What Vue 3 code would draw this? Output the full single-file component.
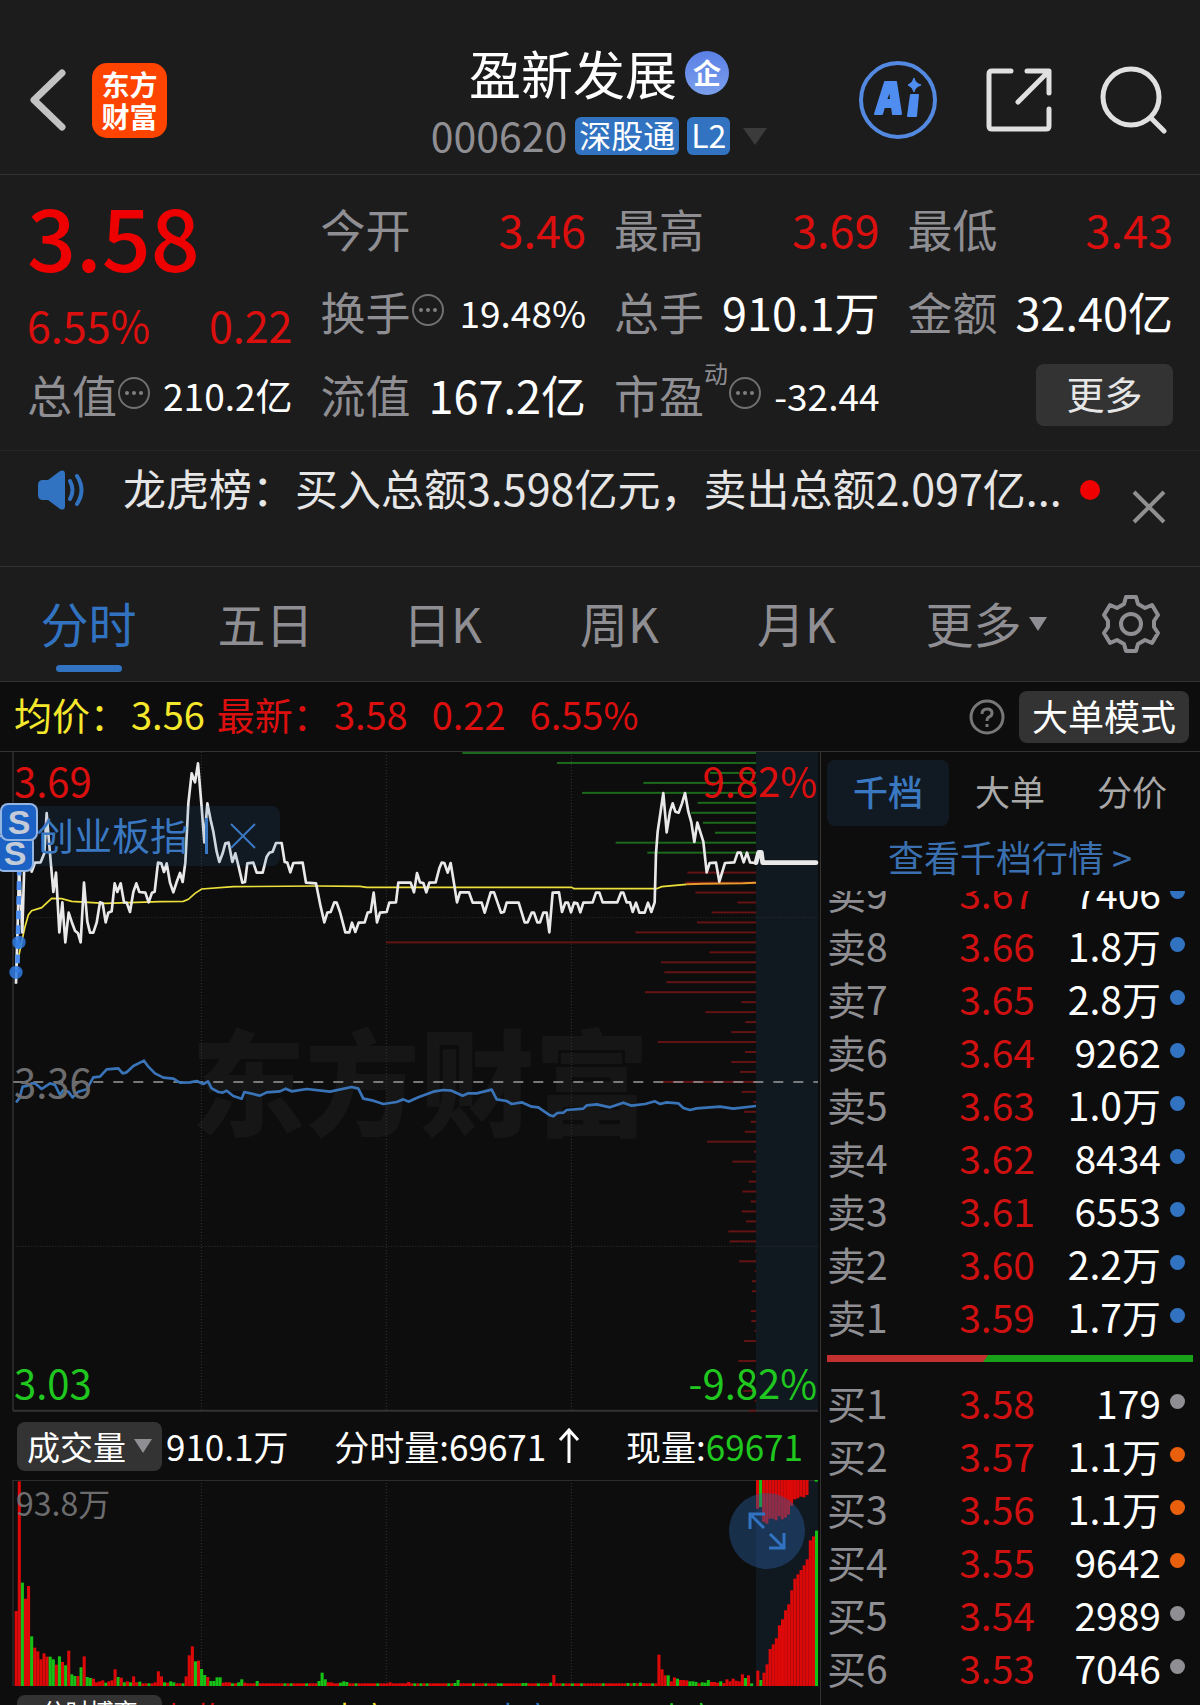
<template>
  <div class="stock-view">
    <!-- Header -->
    <header class="stock-header">
      <div class="header-left">
        <button class="icon-btn" aria-label="返回">
          <svg width="36" height="62" viewBox="0 0 36 62" fill="none">
            <path d="M32 4L4 31L32 58" stroke="#c2c2c2" stroke-width="7" stroke-linecap="round" stroke-linejoin="round" />
          </svg>
        </button>
        <a href="#" class="brand">
          <span>东方</span>
          <span>财富</span>
        </a>
      </div>
      <div class="header-center">
        <h1 class="stock-name">盈新发展<span class="corp-badge">企</span></h1>
        <div class="stock-code">
          <span class="code">000620</span>
          <span class="tag">深股通</span>
          <span class="tag">L2</span>
          <svg class="code-caret" width="24" height="17" viewBox="0 0 24 17">
            <path d="M0 0H24L12 17Z" fill="#3b3b3b" />
          </svg>
        </div>
      </div>
      <div class="header-right">
        <button class="icon-btn" aria-label="AI">
          <svg width="80" height="80" viewBox="0 0 80 80" fill="none">
            <circle cx="40" cy="40" r="37" stroke="#5389e0" stroke-width="4" />
            <path d="M17 54L27 22H38L43 54H35L34 47H26L24 54ZM28 40H33L32 29Z" fill="#4f8df0" stroke="#4f8df0" stroke-width="2" stroke-linejoin="round" fill-rule="evenodd" />
            <path d="M53 35H60L58 56H50Z" fill="#4f8df0" stroke="#4f8df0" stroke-width="2" stroke-linejoin="round" />
            <path d="M56 18Q57 23 63 25Q57 27 56 32Q55 27 50 25Q55 23 56 18Z" fill="#4f8df0" stroke="#4f8df0" />
          </svg>
        </button>
        <button class="icon-btn" aria-label="分享">
          <svg width="66" height="66" viewBox="0 0 66 66" fill="none" stroke="#e0e0e0" stroke-width="5" stroke-linecap="round" stroke-linejoin="round">
            <path d="M25 4H6Q3 4 3 7V59Q3 62 6 62H60Q63 62 63 59V42" />
            <path d="M41 4H63V26M62 5L32 35" />
          </svg>
        </button>
        <button class="icon-btn" aria-label="搜索">
          <svg width="68" height="68" viewBox="0 0 68 68" fill="none" stroke="#e0e0e0" stroke-width="5" stroke-linecap="round">
            <circle cx="31" cy="31" r="28" />
            <path d="M52 53L64 65" />
          </svg>
        </button>
      </div>
    </header>

    <!-- Quote -->
    <section class="quote">
      <div class="quote-main">
        <div class="price">3.58</div>
        <div class="change">
          <span>6.55%</span>
          <span>0.22</span>
        </div>
      </div>
      <div v-for="item in quoteItems" :key="item.label" class="quote-item">
        <span class="label">{{ item.label }}</span>
        <sup v-if="item.sup" class="sup">{{ item.sup }}</sup>
        <svg v-if="item.info" class="info-icon" width="34" height="34" viewBox="0 0 34 34">
          <circle cx="17" cy="17" r="15" fill="none" stroke="#707073" stroke-width="2" />
          <circle cx="10" cy="17" r="2" fill="#808083" />
          <circle cx="17" cy="17" r="2" fill="#808083" />
          <circle cx="24" cy="17" r="2" fill="#808083" />
        </svg>
        <span class="value" :class="{ up: item.up, small: item.info }">{{ item.value }}</span>
      </div>
      <div class="quote-more">
        <button class="more-btn">更多</button>
      </div>
    </section>

    <!-- Notice -->
    <section class="notice">
      <svg class="speaker" width="50" height="42" viewBox="0 0 50 42">
        <path d="M0 16Q0 11 5 11H10L22 2Q27 0 27 5V37Q27 42 22 40L10 31H5Q0 31 0 26Z" fill="#3173c1" />
        <path d="M32 12Q37 21 32 30M39 7Q48 21 39 35" fill="none" stroke="#3173c1" stroke-width="4" stroke-linecap="round" />
      </svg>
      <a href="#" class="notice-text">龙虎榜：买入总额3.598亿元，卖出总额2.097亿...</a>
      <span class="notice-dot"></span>
      <button class="icon-btn notice-close" aria-label="关闭">
        <svg width="34" height="34" viewBox="0 0 34 34">
          <path d="M2 2L32 32M32 2L2 32" stroke="#909090" stroke-width="4" />
        </svg>
      </button>
    </section>

    <!-- Period tabs -->
    <nav class="tabs">
      <button v-for="(tab, index) in tabs" :key="tab" class="tab" :class="{ active: index === 0 }">
        <span class="tab-text">
          {{ tab }}
          <svg v-if="tab === '更多'" class="tab-caret" width="18" height="14" viewBox="0 0 18 14">
            <path d="M0 0H18L9 14Z" fill="#8e8e93" />
          </svg>
        </span>
      </button>
      <button class="icon-btn" aria-label="设置">
        <svg width="60" height="60" viewBox="0 0 60 60" fill="none" stroke="#8e8e93" stroke-width="4" stroke-linejoin="round">
          <path d="M25 3H35L37 10L44 14L51 11L57 21L53 27V33L57 39L51 49L44 46L37 50L35 57H25L23 50L16 46L9 49L3 39L7 33V27L3 21L9 11L16 14L23 10Z" />
          <circle cx="30" cy="30" r="10" />
        </svg>
      </button>
    </nav>

    <!-- Average and latest price -->
    <div class="summary">
      <div class="summary-text">
        <span class="avg">均价：<b>3.56</b></span>
        <span class="latest">最新：<b>3.58</b><b>0.22</b><b>6.55%</b></span>
      </div>
      <svg class="help" width="38" height="38" viewBox="0 0 38 38" fill="none" stroke="#77777a" stroke-width="3">
        <circle cx="19" cy="19" r="16" />
        <path d="M14 16Q14 11 19 11Q24 11 24 15Q24 18 21 19Q19 20 19 23M19 26V29" />
      </svg>
      <button class="mode-btn">大单模式</button>
    </div>

    <main class="content">
      <section class="charts">
        <!-- Intraday chart -->
        <div class="chart">
          <svg viewBox="0 36 2460 1980">
            <text x="572" y="1162" class="watermark">东方财富</text>
            <rect x="2268" y="36" width="186" height="1980" fill="#101820" />
            <g stroke="#343434" stroke-width="3" stroke-dasharray="3 6">
              <path d="M604 36V2012M1159 36V2012M1714 36V2012M40 533H2454M40 1519H2454" />
            </g>
            <path d="M39 36V2012" stroke="#2c2c2e" stroke-width="5" />
            <path d="M39 2012H2454" stroke="#333335" stroke-width="6" />
            <rect
              v-for="(bar, index) in profile"
              :key="index"
              :x="2268 - bar"
              :y="36 + index * 29.9"
              :width="bar"
              height="6"
              :fill="index < 11 ? '#1b691b' : '#631314'"
            />
            <path d="M40 1026H2454" stroke="#9b9b9b" stroke-width="5" stroke-dasharray="30 30" />
            <polyline :points="indexLine" fill="none" stroke="#3a74b8" stroke-width="8" stroke-linejoin="round" />
            <polyline :points="avgLine" fill="none" stroke="#ece03c" stroke-width="5" />
            <path d="M2060 433L2110 431L2230 430L2268 428" fill="none" stroke="#e89a2c" stroke-width="6" />
            <polyline :points="priceLine" fill="none" stroke="#e9e9e9" stroke-width="8" stroke-linejoin="round" />
            <path d="M2268 368L2276 337H2284L2288 368H2448" fill="none" stroke="#e9e9e9" stroke-width="14" stroke-linecap="round" stroke-linejoin="round" />
            <path d="M58 380L52 697" stroke="#4d8ff0" stroke-width="14" stroke-dasharray="26 18" />
            <circle cx="57" cy="607" r="20" fill="#2f7ae0" fill-opacity="0.85" />
            <circle cx="48" cy="697" r="20" fill="#2f7ae0" fill-opacity="0.85" />
          </svg>
          <span class="axis top-left up">3.69</span>
          <span class="axis top-right up">9.82%</span>
          <span class="axis middle-left">3.36</span>
          <span class="axis bottom-left down">3.03</span>
          <span class="axis bottom-right down">-9.82%</span>
          <div class="overlay-index">
            <span>创业板指</span>
            <i class="overlay-split"></i>
            <button class="icon-btn" aria-label="移除叠加">
              <svg width="26" height="26" viewBox="0 0 26 26">
                <path d="M1 1L25 25M25 1L1 25" stroke="#3a78c2" stroke-width="2" />
              </svg>
            </button>
          </div>
          <span class="sell-mark second">S</span>
          <span class="sell-mark">S</span>
        </div>

        <!-- Volume chart -->
        <div class="volume-head">
          <button class="indicator-btn">
            成交量
            <svg width="18" height="14" viewBox="0 0 18 14"><path d="M0 0H18L9 14Z" fill="#8e8e93" /></svg>
          </button>
          <span class="volume-total">910.1万</span>
          <span class="volume-minute">分时量:69671<svg width="22" height="36" viewBox="0 0 22 36" fill="none" stroke="#fff" stroke-width="3"><path d="M11 35V2M2 12L11 2L20 12" /></svg></span>
          <span class="volume-now">现量:<em>69671</em></span>
        </div>
        <div class="volume">
          <svg viewBox="0 300 2460 618">
            <rect x="2268" y="300" width="186" height="618" fill="#101820" />
            <path d="M604 300V918M1159 300V918M1714 300V918" stroke="#343434" stroke-width="3" stroke-dasharray="3 6" />
            <path d="M39 918V301H2454" fill="none" stroke="#2c2c2e" stroke-width="4" />
            <rect
              v-for="(bar, index) in volumeBars"
              :key="index"
              :x="44 + index * 9.27"
              :y="918 - bar.height"
              width="9.27"
              :height="bar.height"
              :fill="bar.up ? '#dd0808' : '#16c016'"
            />
            <rect
              v-for="(height, index) in hangingBars"
              :key="'h' + index"
              :x="2268 + index * 9.27"
              y="300"
              width="9.27"
              :height="height"
              :fill="index === 1 || index === 19 ? '#16c016' : '#dd0808'"
            />
          </svg>
          <span class="volume-max">93.8万</span>
          <button class="expand-btn" aria-label="展开">
            <svg width="38" height="38" viewBox="0 0 38 38" fill="none" stroke="#3173c1" stroke-width="3">
              <path d="M2 17V2H17M2 2L16 16M22 22L36 36M36 21V36H21" />
            </svg>
          </button>
        </div>
        <div class="game-row">
          <button class="indicator-btn game-btn">分时博弈</button>
          <span class="game-item up">机构:-1.003</span>
          <span class="game-item yellow">大户:0.087</span>
          <span class="game-item blue">中户:0.788</span>
          <span class="game-item down">小户:0.579</span>
        </div>
      </section>

      <!-- Order book -->
      <aside class="book">
        <div class="book-tabs">
          <button class="book-tab active">千档</button>
          <button class="book-tab">大单</button>
          <button class="book-tab">分价</button>
        </div>
        <a href="#" class="book-link">查看千档行情 &gt;</a>
        <div class="book-list">
          <table class="asks">
            <tbody>
              <tr v-for="row in asks" :key="row[0]">
                <th scope="row">{{ row[0] }}</th>
                <td class="book-price">{{ row[1] }}</td>
                <td class="book-volume">{{ row[2] }}</td>
                <td class="book-dot"><i></i></td>
              </tr>
            </tbody>
          </table>
          <div class="ratio"><div class="ratio-buy"></div></div>
          <table>
            <tbody>
              <tr v-for="row in bids" :key="row[0]">
                <th scope="row">{{ row[0] }}</th>
                <td class="book-price">{{ row[1] }}</td>
                <td class="book-volume">{{ row[2] }}</td>
                <td class="book-dot"><i :class="row[3]"></i></td>
              </tr>
            </tbody>
          </table>
        </div>
      </aside>
    </main>
  </div>
</template>

<script setup>
import { computed } from 'vue'

const quoteItems = [
  { label: '今开', value: '3.46', up: true },
  { label: '最高', value: '3.69', up: true },
  { label: '最低', value: '3.43', up: true },
  { label: '换手', value: '19.48%', info: true },
  { label: '总手', value: '910.1万' },
  { label: '金额', value: '32.40亿' },
  { label: '总值', value: '210.2亿', info: true },
  { label: '流值', value: '167.2亿' },
  { label: '市盈', value: '-32.44', info: true, sup: '动' }
]

const tabs = ['分时', '五日', '日K', '周K', '月K', '更多']

// 卖盘
const asks = [
  ['卖9', '3.67', '7406'],
  ['卖8', '3.66', '1.8万'],
  ['卖7', '3.65', '2.8万'],
  ['卖6', '3.64', '9262'],
  ['卖5', '3.63', '1.0万'],
  ['卖4', '3.62', '8434'],
  ['卖3', '3.61', '6553'],
  ['卖2', '3.60', '2.2万'],
  ['卖1', '3.59', '1.7万']
]

// 买盘
const bids = [
  ['买1', '3.58', '179', 'grey'],
  ['买2', '3.57', '1.1万', 'orange'],
  ['买3', '3.56', '1.1万', 'orange'],
  ['买4', '3.55', '9642', 'orange'],
  ['买5', '3.54', '2989', 'grey'],
  ['买6', '3.53', '7046', 'grey']
]

const priceLine = `48,731 49,690 53,560 57,380 62,480 67,577 75,300 80,270 88,330 95,395 105,368 122,367 133,340
140,219 150,340 160,456 168,398 178,577 187,487 196,607 206,518 215,545 225,572 234,580 242,607 252,428
262,545 270,578 280,578 290,548 300,487 308,490 317,547 325,518 335,514 344,430 352,456 362,430 372,487
380,488 390,516 400,456 409,430 418,456 436,458 446,487 456,458 464,455 474,368 484,370 492,396 500,370
510,428 520,457 530,426 540,399 548,426 556,368 565,190 575,100 585,127 594,70 604,190 613,307 622,190
632,240 640,275 650,335 658,366 668,340 676,310 686,308 697,366 706,340 716,380 727,428 735,426 742,370
760,368 770,398 788,398 800,350 808,338 818,335 828,309 845,309 854,366 862,368 871,397 880,369 908,368
918,428 948,430 962,500 973,547 982,518 992,516 1003,487 1010,488 1020,516 1036,577 1048,577 1056,548
1066,576 1076,548 1094,547 1103,518 1112,516 1121,458 1131,547 1140,518 1160,516 1168,488 1188,487
1195,428 1232,428 1242,457 1251,399 1260,427 1270,429 1279,457 1288,428 1307,427 1318,385 1325,368
1333,369 1343,398 1352,369 1362,430 1371,487 1380,457 1407,457 1418,488 1445,488 1454,518 1472,457
1482,457 1503,518 1512,516 1520,488 1556,488 1574,547 1583,547 1595,518 1602,518 1612,547 1620,547
1630,518 1640,518 1648,577 1658,458 1677,457 1686,516 1696,488 1704,488 1713,517 1722,488 1732,490
1741,517 1750,488 1778,487 1788,458 1798,458 1808,487 1852,487 1863,458 1870,458 1880,487 1890,487
1898,516 1908,488 1918,518 1934,518 1944,488 1954,516 1964,487 1968,340 1973,275 1990,159 2000,277
2010,215 2018,190 2026,215 2036,218 2046,190 2055,159 2065,215 2074,247 2083,306 2092,248 2110,305
2120,397 2129,369 2148,368 2158,425 2175,369 2203,367 2213,338 2222,338 2231,367 2241,338 2250,367 2266,369`

const avgLine = `50,680 60,630 75,560 85,525 95,512 125,503 155,475 185,476 215,484 315,490 480,485 550,484
565,478 585,460 605,447 700,440 950,438 1080,439 1100,442 1715,442 1722,446 1970,446 1985,440 2060,433`

const indexLine = `48,1087 58,1075 68,1040 80,1038 95,1030 105,1030 125,1047 150,1030 165,1035 180,1065 190,1050
205,1055 218,1072 235,1055 260,1048 280,1012 300,1010 320,988 355,985 368,1000 380,997 400,978 432,962
445,980 465,1000 490,1013 520,1016 540,1028 570,1027 590,1023 610,1032 624,1024 635,1045 655,1056 668,1058
680,1052 700,1068 725,1076 733,1056 780,1067 800,1057 840,1054 857,1046 875,1054 920,1047 990,1055
1055,1041 1075,1046 1090,1076 1120,1082 1150,1092 1190,1086 1210,1078 1225,1085 1255,1072 1300,1055
1330,1050 1355,1052 1388,1067 1405,1060 1430,1060 1475,1049 1490,1078 1520,1083 1535,1092 1565,1087
1595,1100 1615,1102 1650,1126 1660,1129 1672,1119 1690,1118 1700,1110 1750,1106 1760,1096 1790,1093
1830,1102 1870,1088 1895,1097 1935,1092 1965,1084 1980,1092 2000,1087 2035,1090 2050,1104 2070,1110
2090,1105 2160,1100 2200,1106 2268,1098`

// 分价成交分布
const profile = [
  881, 597, 138, 338, 522, 175, 195, 159, 123, 421, 326, 0, 206, 212, 182, 56, 133, 177, 362, 1110, 140, 285,
  275, 269, 333, 44, 152, 32, 74, 295, 33, 74, 48, 285, 43, 8, 36, 16, 34, 147, 6, 71, 11, 22, 41, 16, 43, 30,
  83, 79, 3, 51, 4, 12, 12, 0, 15, 14, 4, 36, 0, 53, 0, 0, 38, 4, 20
]

// 前 75 分钟成交量，负数为绿柱
const openVolume = [
  225, 614, -310, 262, 300, -149, 115, 104, 80, 98, 88, -88, -80, 64, -89, 72, -62, 106, -35, -30, 30, -56, 89,
  -27, -24, 22, 11, 14, 17, -10, 14, 17, 50, -27, 25, -11, 14, -11, 29, 11, -13, 8, 8, -8, 8, 11, 44, 29, -11,
  10, -14, -11, 8, 8, -8, 29, 92, 119, -74, 76, -51, -33, 27, -15, -15, -26, -26, 10, 11, 11, -8, 8, -11, -20, 10
]

const middleVolume = {
  78: -15, 87: -8, 89: -8, 94: -8, 98: -15, 99: -40, 100: -20, 101: 11, 102: 11, 105: -10, 106: -14, 107: -12,
  110: -8, 117: -8, 121: 11, 127: 12, 129: -8, 131: -8, 133: -8, 140: -8, 142: -9, 143: -18, 148: -8, 152: -8,
  156: -8, 157: -8, 164: -9, 165: -9, 169: -8, 173: -10, 174: 33, 177: -8, 180: -8, 183: -8, 190: -8, 198: -9,
  200: -9, 202: -10, 206: -8
}

const closeVolume = [
  94, 50, 32, -32, 14, 26, -22, 18, 18, 17, -14, -14, -12, 8, -11, -10, -18, 12, 12, 10, -14, 9, 20, 14, 22, 16,
  14, 35, -24, 32, -8, 0, 46, -18, 40, 65, 111, 125, 143, 182, 200, 227, 245, 287, 322, 335, 348, 362, 380, 437,
  449, -466
]

const hangingBars = [86, 81, 126, 131, 116, 116, 121, 109, 118, 113, 104, 77, 58, 55, 50, 52, 45, 0, 0, 5]

const volumeBars = computed(() => {
  const values = [...openVolume]
  for (let i = openVolume.length; i < 208; i++) {
    values.push(middleVolume[i] || 8)
  }
  return values.concat(closeVolume).map((value) => ({ height: Math.abs(value), up: value > 0 }))
})
</script>

<style>
body {
  background: #0d0d0d;
}
</style>

<style scoped>
.stock-view {
  display: flex;
  flex-direction: column;
  height: 100vh;
  overflow: hidden;
  background: #1c1c1c;
  color: #fff;
  font-family: 'Noto Sans CJK SC', sans-serif;
  white-space: nowrap;
}

button {
  padding: 0;
  border: none;
  background: none;
  color: inherit;
  font: inherit;
  cursor: pointer;
}

a {
  color: inherit;
  text-decoration: none;
}

svg {
  display: block;
  flex-shrink: 0;
}

.icon-btn {
  display: flex;
  align-items: center;
  justify-content: center;
}

.up {
  color: #dc0f0f;
}

.down {
  color: #1fc71f;
}

.yellow {
  color: #f5e72b;
}

.blue {
  color: #3173c1;
}

/* Header */
.stock-header {
  display: grid;
  grid-template-columns: 1fr auto 1fr;
  align-items: center;
  height: 148px;
  padding: 26px 32px 0 30px;
  border-bottom: 1px solid #333;
}

.header-left {
  display: flex;
  align-items: center;
  gap: 26px;
}

.brand {
  display: flex;
  flex-direction: column;
  align-items: center;
  justify-content: center;
  width: 75px;
  height: 75px;
  border-radius: 15px;
  background: #ff4400;
  font-size: 28px;
  font-weight: 700;
  line-height: 32px;
}

.header-center {
  display: flex;
  flex-direction: column;
  align-items: center;
  gap: 16px;
}

.stock-name {
  display: flex;
  align-items: center;
  gap: 8px;
  margin: 0;
  font-size: 52px;
  font-weight: 400;
  line-height: 56px;
}

.corp-badge {
  width: 44px;
  height: 44px;
  border-radius: 50%;
  background: linear-gradient(#5a80e6, #7b9fec);
  font-size: 28px;
  font-weight: 700;
  line-height: 42px;
  text-align: center;
}

.stock-code {
  display: flex;
  align-items: center;
  gap: 8px;
}

.code {
  color: #8e8e93;
  font-size: 41px;
  line-height: 34px;
  padding-bottom: 4px;
}

.tag {
  height: 38px;
  padding: 0 4px;
  border-radius: 6px;
  background: #3173c1;
  font-size: 32px;
  line-height: 34px;
}

.code-caret {
  margin-left: 5px;
}

.header-right {
  display: flex;
  align-items: center;
  justify-content: flex-end;
  gap: 48px;
}

/* Quote */
.quote {
  display: grid;
  grid-template-columns: repeat(4, 1fr);
  grid-auto-rows: 83px;
  column-gap: 28px;
  padding: 12px 27px 14px;
  border-bottom: 1px solid #262626;
}

.quote-main {
  grid-row: span 2;
  padding-top: 4px;
}

.price {
  color: #ee0000;
  font-size: 86px;
  font-weight: 500;
  line-height: 88px;
}

.change {
  display: flex;
  justify-content: space-between;
  margin-top: 20px;
  color: #dc0f0f;
  font-size: 43px;
  line-height: 50px;
}

.quote-item {
  display: flex;
  align-items: center;
  font-size: 45px;
  line-height: 50px;
}

.label {
  color: #8e8e93;
}

.sup {
  align-self: flex-start;
  margin-top: 8px;
  color: #8e8e93;
  font-size: 24px;
  line-height: 24px;
}

.info-icon {
  margin-bottom: 4px;
}

.value {
  margin-left: auto;
}

.value.small {
  font-size: 37px;
}

.quote-more {
  display: flex;
  align-items: center;
  justify-content: flex-end;
}

.more-btn {
  width: 137px;
  height: 62px;
  padding-bottom: 4px;
  border-radius: 8px;
  background: #333;
  color: #e6e6e6;
  font-size: 38px;
  line-height: 50px;
}

/* Notice */
.notice {
  display: flex;
  align-items: center;
  height: 77px;
  padding: 0 34px 38px 38px;
  border-bottom: 1px solid #333;
}

.notice-text {
  flex: 1;
  margin-left: 35px;
  padding-bottom: 6px;
  color: #e6e6e6;
  font-size: 43px;
  line-height: 60px;
}

.notice-dot {
  width: 20px;
  height: 20px;
  border-radius: 50%;
  background: #f00000;
}

.notice-close {
  align-self: flex-end;
  margin-bottom: 4px;
  margin-left: 32px;
}

/* Tabs */
.tabs {
  display: grid;
  grid-template-columns: repeat(6, 177fr) 138fr;
  height: 114px;
  border-bottom: 1px solid #333;
}

.tab {
  position: relative;
  padding-bottom: 4px;
  color: #8e8e93;
  font-size: 48px;
  line-height: 60px;
}

.tab.active {
  color: #3173c1;
}

.tab.active::after {
  content: '';
  position: absolute;
  bottom: 9px;
  left: 50%;
  width: 66px;
  height: 7px;
  margin-left: -33px;
  border-radius: 4px;
  background: #3173c1;
}

.tab-text {
  position: relative;
}

.tab-caret {
  position: absolute;
  top: 30px;
  left: 104px;
}

/* Summary */
.summary {
  display: flex;
  align-items: center;
  height: 69px;
  padding: 0 11px 0 14px;
  border-bottom: 1px solid #333;
  background: #0d0d0d;
}

.summary-text {
  display: flex;
  gap: 12px;
  padding-bottom: 5px;
  font-size: 38px;
  line-height: 50px;
}

.summary b {
  margin-left: 24px;
  font-weight: 400;
}

.summary b:first-child {
  margin-left: 3px;
}

.avg {
  color: #f5e72b;
}

.latest {
  color: #dc0f0f;
}

.help {
  margin-left: auto;
}

.mode-btn {
  height: 52px;
  margin-left: 13px;
  padding: 0 13px 4px;
  border-radius: 8px;
  background: #333;
  font-size: 36px;
  line-height: 46px;
}

/* Charts */
.content {
  display: grid;
  grid-template-columns: minmax(0, 820fr) minmax(0, 380fr);
  flex: 1;
  min-height: 0;
  background: #0d0d0d;
}

.charts .chart > svg,
.charts .volume > svg {
  width: 100%;
}

.chart,
.volume {
  position: relative;
}

.watermark {
  fill: #161616;
  font-size: 344px;
  font-weight: 900;
}

.axis {
  position: absolute;
  font-size: 40px;
  line-height: 48px;
}

.top-left {
  top: 4px;
  left: 14px;
}

.top-right {
  top: 4px;
  right: 3px;
}

.middle-left {
  top: 50%;
  left: 14px;
  margin-top: -25px;
  color: #6c6c6e;
}

.bottom-left {
  bottom: 6px;
  left: 14px;
}

.bottom-right {
  right: 3px;
  bottom: 6px;
}

.overlay-index {
  position: absolute;
  top: 54px;
  left: 12px;
  display: flex;
  align-items: center;
  height: 60px;
  padding: 0 24px;
  border-radius: 8px;
  background: rgba(40, 100, 170, 0.14);
  color: #3a78c2;
  font-size: 38px;
  line-height: 50px;
}

.overlay-index span {
  padding-bottom: 4px;
}

.overlay-split {
  width: 3px;
  height: 36px;
  margin: 0 22px 0 17px;
  background: #3a78c2;
}

.sell-mark {
  position: absolute;
  top: 51px;
  left: 0;
  width: 34px;
  height: 34px;
  border: 2px solid rgba(200, 215, 240, 0.7);
  border-radius: 8px;
  background: #1c62c4;
  color: #c3cbd8;
  font-family: 'Liberation Sans', sans-serif;
  font-size: 34px;
  font-weight: 700;
  line-height: 34px;
  text-align: center;
}

.sell-mark.second {
  top: 82px;
  left: -4px;
}

/* Volume */
.volume-head {
  display: flex;
  align-items: center;
  height: 68px;
  padding: 0 17px;
  font-size: 35px;
  line-height: 46px;
}

.indicator-btn {
  display: flex;
  align-items: center;
  justify-content: space-between;
  width: 145px;
  height: 49px;
  padding: 0 10px;
  border-radius: 8px;
  background: #333;
  font-size: 33px;
  line-height: 44px;
}

.volume-total {
  margin-left: 4px;
}

.volume-minute {
  display: flex;
  align-items: center;
  gap: 12px;
  margin: 0 auto;
}

.volume-now em {
  color: #1fc71f;
  font-style: normal;
}

.volume-max {
  position: absolute;
  top: 2px;
  left: 16px;
  color: #6c6c6e;
  font-size: 32px;
  line-height: 40px;
}

.expand-btn {
  position: absolute;
  top: 13px;
  right: 15px;
  display: flex;
  align-items: center;
  justify-content: center;
  width: 76px;
  height: 76px;
  border-radius: 50%;
  background: rgba(40, 95, 160, 0.42);
}

.game-row {
  display: flex;
  padding: 9px 0 0 17px;
  font-size: 30px;
  line-height: 40px;
}

.game-btn {
  align-items: flex-start;
  justify-content: center;
  flex-shrink: 0;
  margin-right: 4px;
  font-size: 24px;
  line-height: 32px;
}

.game-item {
  flex: 1;
  min-width: 0;
}

/* Order book */
.book {
  display: flex;
  flex-direction: column;
  padding: 8px 7px 0 6px;
  border-left: 1px solid #333;
}

.book-tabs {
  display: flex;
}

.book-tab {
  flex: 1;
  height: 66px;
  padding-bottom: 4px;
  border-radius: 8px;
  color: #a8a8a8;
  font-size: 35px;
  line-height: 50px;
}

.book-tab.active {
  background: #111a22;
  color: #3a78c2;
  font-weight: 500;
}

.book-link {
  margin-top: 6px;
  color: #3a70b0;
  font-size: 36px;
  line-height: 48px;
  text-align: center;
}

.book-list {
  flex: 1;
  min-height: 0;
  margin-top: 11px;
  overflow: hidden;
}

.book-list table {
  width: 100%;
  border-collapse: collapse;
  font-size: 39px;
}

.book-list tr {
  height: 53px;
}

.book-list th,
.book-list td {
  padding: 0;
  line-height: 48px;
}

.book-list th {
  color: #8e8e93;
  font-weight: 400;
  text-align: left;
}

.asks {
  margin-top: -26px;
}

.book-price {
  color: #cf1010;
  text-align: right;
}

.book-volume {
  width: 126px;
  text-align: right;
}

.book-dot {
  width: 32px;
}

.book-dot i {
  display: block;
  width: 15px;
  height: 15px;
  margin: 0 auto;
  border-radius: 50%;
  background: #3173c1;
}

.book-dot i.grey {
  background: #8e8e93;
}

.book-dot i.orange {
  background: #ea5f0c;
}

.ratio {
  height: 7px;
  margin: 13px 0;
  background: #18a018;
}

.ratio-buy {
  width: 44%;
  height: 100%;
  background: #c23030;
  clip-path: polygon(0 0, 100% 0, 97% 100%, 0 100%);
}
</style>
